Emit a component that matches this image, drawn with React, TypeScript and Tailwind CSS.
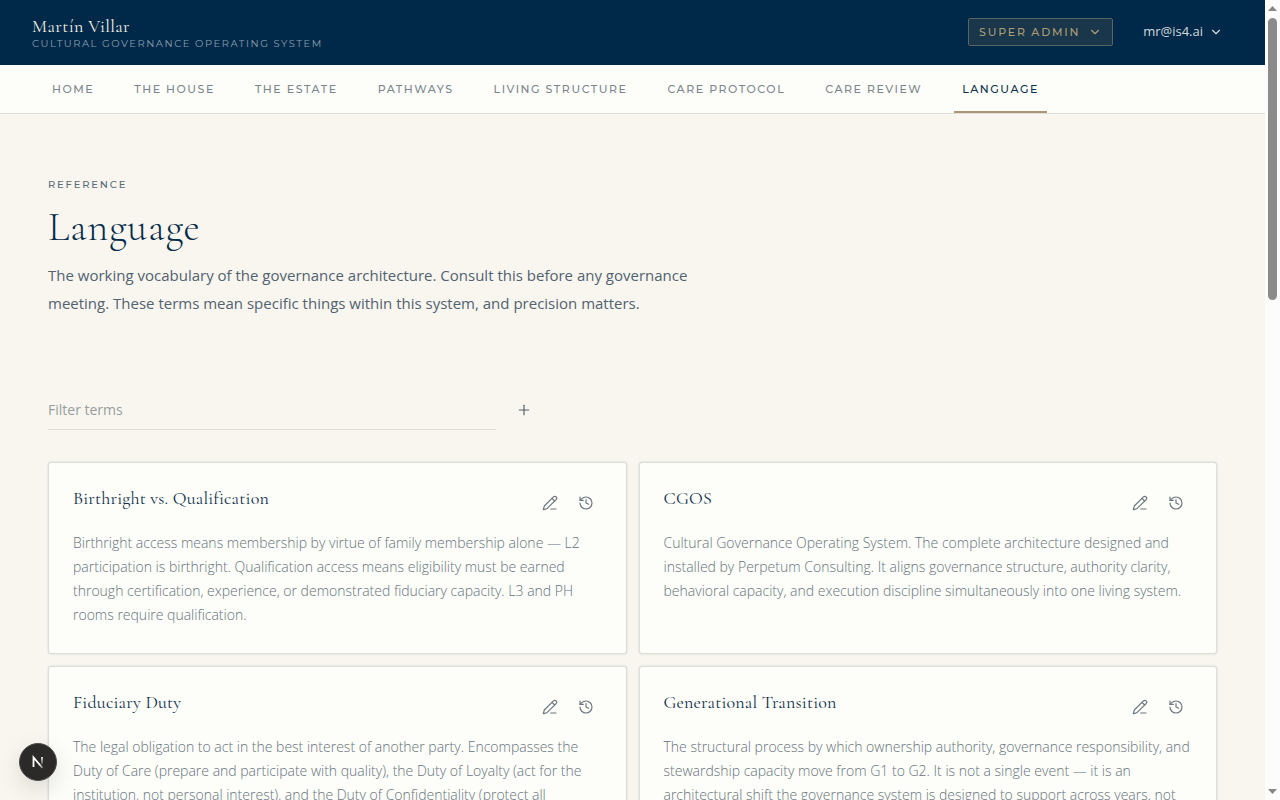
import { useState } from "react";
import { ChevronDown, History, PencilLine, Plus } from "lucide-react";

const serif = "font-['Cormorant_Garamond','Liberation_Serif',serif]";
const caps = "font-['Montserrat','Inter',sans-serif] uppercase";

const navItems = [
  "Home",
  "The House",
  "The Estate",
  "Pathways",
  "Living Structure",
  "Care Protocol",
  "Care Review",
  "Language",
];

const terms = [
  {
    name: "Birthright vs. Qualification",
    text: "Birthright access means membership by virtue of family membership alone — L2 participation is birthright. Qualification access means eligibility must be earned through certification, experience, or demonstrated fiduciary capacity. L3 and PH rooms require qualification.",
  },
  {
    name: "CGOS",
    text: "Cultural Governance Operating System. The complete architecture designed and installed by Perpetum Consulting. It aligns governance structure, authority clarity, behavioral capacity, and execution discipline simultaneously into one living system.",
  },
  {
    name: "Fiduciary Duty",
    text: "The legal obligation to act in the best interest of another party. Encompasses the Duty of Care (prepare and participate with quality), the Duty of Loyalty (act for the institution, not personal interest), and the Duty of Confidentiality (protect all",
  },
  {
    name: "Generational Transition",
    text: "The structural process by which ownership authority, governance responsibility, and stewardship capacity move from G1 to G2. It is not a single event — it is an architectural shift the governance system is designed to support across years, not",
  },
];

function Header() {
  return (
    <header className="flex h-[65px] items-center justify-between border-b border-[#002848] bg-[#002848] pr-[42px] pl-8">
      <div className="flex flex-col pt-1">
        <span className={`${serif} text-lg leading-5 tracking-[0.02em] text-[#f3f1e9]`}>Martín Villar</span>
        <span className={`${caps} text-[10px] leading-4 tracking-[0.15em] text-[#87a0b0]`}>
          Cultural Governance Operating System
        </span>
      </div>
      <div className="flex items-center gap-[30px]">
        <button
          type="button"
          className={`${caps} flex h-7 items-center gap-2 rounded-xs border border-[#55685f] bg-[#1a364a] px-[10px] text-[11px] font-medium tracking-[0.16em] text-[#ab9c76]`}
        >
          Super Admin
          <ChevronDown size={14} strokeWidth={2} />
        </button>
        <button type="button" className="flex items-center gap-[6px] text-[13px] text-[#d3dade]">
          mr@is4.ai
          <ChevronDown size={14} strokeWidth={2} />
        </button>
      </div>
    </header>
  );
}

function Nav() {
  return (
    <nav className="flex h-[49px] gap-6 border-b border-[#dfdfda] bg-[#fdfdf9] px-11">
      {navItems.map((item) => (
        <a
          key={item}
          href="#"
          aria-current={item === "Language" ? "page" : undefined}
          className={`${caps} flex items-center border-y-2 border-t-transparent px-2 text-[11px] font-medium tracking-[0.14em] whitespace-nowrap ${
            item === "Language" ? "border-b-[#ac967a] text-[#0c2f4c]" : "border-b-transparent text-[#7b858d]"
          }`}
        >
          {item}
        </a>
      ))}
    </nav>
  );
}

function TermCard({ name, text }: { name: string; text: string }) {
  return (
    <article className="rounded-[3px] border border-[#dcdeda] bg-[#fdfdf9] px-6 pt-6 pb-[26px] shadow-[0_0_2px_rgba(0,40,72,0.18)]">
      <div className="flex justify-between">
        <h2 className={`${serif} text-lg leading-[22px] tracking-[0.01em] text-[#0f2f4b]`}>{name}</h2>
        <div className="flex gap-1 text-[#6b767e]">
          <button type="button" aria-label={`Edit ${name}`} className="grid size-8 place-items-center">
            <PencilLine size={16} strokeWidth={1.75} />
          </button>
          <button type="button" aria-label={`History of ${name}`} className="grid size-8 place-items-center">
            <History size={16} strokeWidth={1.75} />
          </button>
        </div>
      </div>
      <p className="mt-3 text-sm leading-6 font-light text-[#66737c]">{text}</p>
    </article>
  );
}

function ScrollRail() {
  return (
    <div aria-hidden="true" className="flex w-[15px] shrink-0 flex-col items-center bg-[#fcfcfc] py-[6px]">
      <svg width="9" height="5" viewBox="0 0 9 5" fill="#878787">
        <path d="M0 5 4.500 0 9 5z" />
      </svg>
      <div className="mt-[7px] h-[282px] w-[9px] rounded-full bg-[#8b8b8b]" />
      <svg className="mt-auto" width="9" height="5" viewBox="0 0 9 5" fill="#878787">
        <path d="M0 0 4.500 5 9 0z" />
      </svg>
    </div>
  );
}

export default function App() {
  const [filter, setFilter] = useState("");
  const shown = terms.filter((t) => t.name.toLowerCase().includes(filter.toLowerCase()));

  return (
    <div className="flex h-screen overflow-hidden bg-[#f8f6ef] font-['Open_Sans',sans-serif]">
      <div className="min-w-0 flex-1 overflow-y-auto [scrollbar-width:none]">
        <Header />
        <Nav />
        <main className="px-12 pt-16 pb-12">
          <p className={`${caps} text-[10px] leading-[14px] font-medium tracking-[0.18em] text-[#5a6c7b]`}>
            Reference
          </p>
          <h1 className={`${serif} mt-[14px] text-[40px] leading-[43px] font-light tracking-[0.02em] text-[#062c4b]`}>
            Language
          </h1>
          <p className="mt-3 max-w-2xl text-[15px] leading-7 text-[#52626f]">
            The working vocabulary of the governance architecture. Consult this before any governance meeting. These
            terms mean specific things within this system, and precision matters.
          </p>
          <div className="mt-[73px] flex items-center gap-3">
            <input
              type="text"
              aria-label="Filter terms"
              placeholder="Filter terms"
              value={filter}
              onChange={(e) => setFilter(e.target.value)}
              className="h-10 w-full max-w-md border-b border-[#dddcd5] bg-transparent text-sm text-[#52626f] outline-none placeholder:text-[#989e9e]"
            />
            <button type="button" aria-label="Add term" className="grid size-8 place-items-center text-[#52606a]">
              <Plus size={16} strokeWidth={1.75} />
            </button>
          </div>
          <section className="mt-8 grid grid-cols-2 gap-3">
            {shown.map((t) => (
              <TermCard key={t.name} name={t.name} text={t.text} />
            ))}
          </section>
        </main>
      </div>
      <ScrollRail />
      <button
        type="button"
        aria-label="Open developer tools"
        className="fixed bottom-[19px] left-[19px] grid size-[38px] place-items-center rounded-full border border-[#4a4a46] bg-[#2b2a28] shadow-[0_8px_24px_rgba(0,0,0,0.12)]"
      >
        <svg width="14" height="14" viewBox="0 0 14 14" fill="none">
          <defs>
            <linearGradient id="diagonal" x1="3" y1="3" x2="12" y2="14" gradientUnits="userSpaceOnUse">
              <stop offset="0.600" stopColor="#fff" />
              <stop offset="1" stopColor="#fff" stopOpacity="0.200" />
            </linearGradient>
            <linearGradient id="stem" x1="11" y1="2" x2="11" y2="10" gradientUnits="userSpaceOnUse">
              <stop stopColor="#fff" />
              <stop offset="1" stopColor="#fff" stopOpacity="0.100" />
            </linearGradient>
          </defs>
          <path d="M2.500 12V2.400L11.500 13" stroke="url(#diagonal)" strokeWidth="1.800" />
          <path d="M11 2V9.500" stroke="url(#stem)" strokeWidth="1.700" />
        </svg>
      </button>
    </div>
  );
}
